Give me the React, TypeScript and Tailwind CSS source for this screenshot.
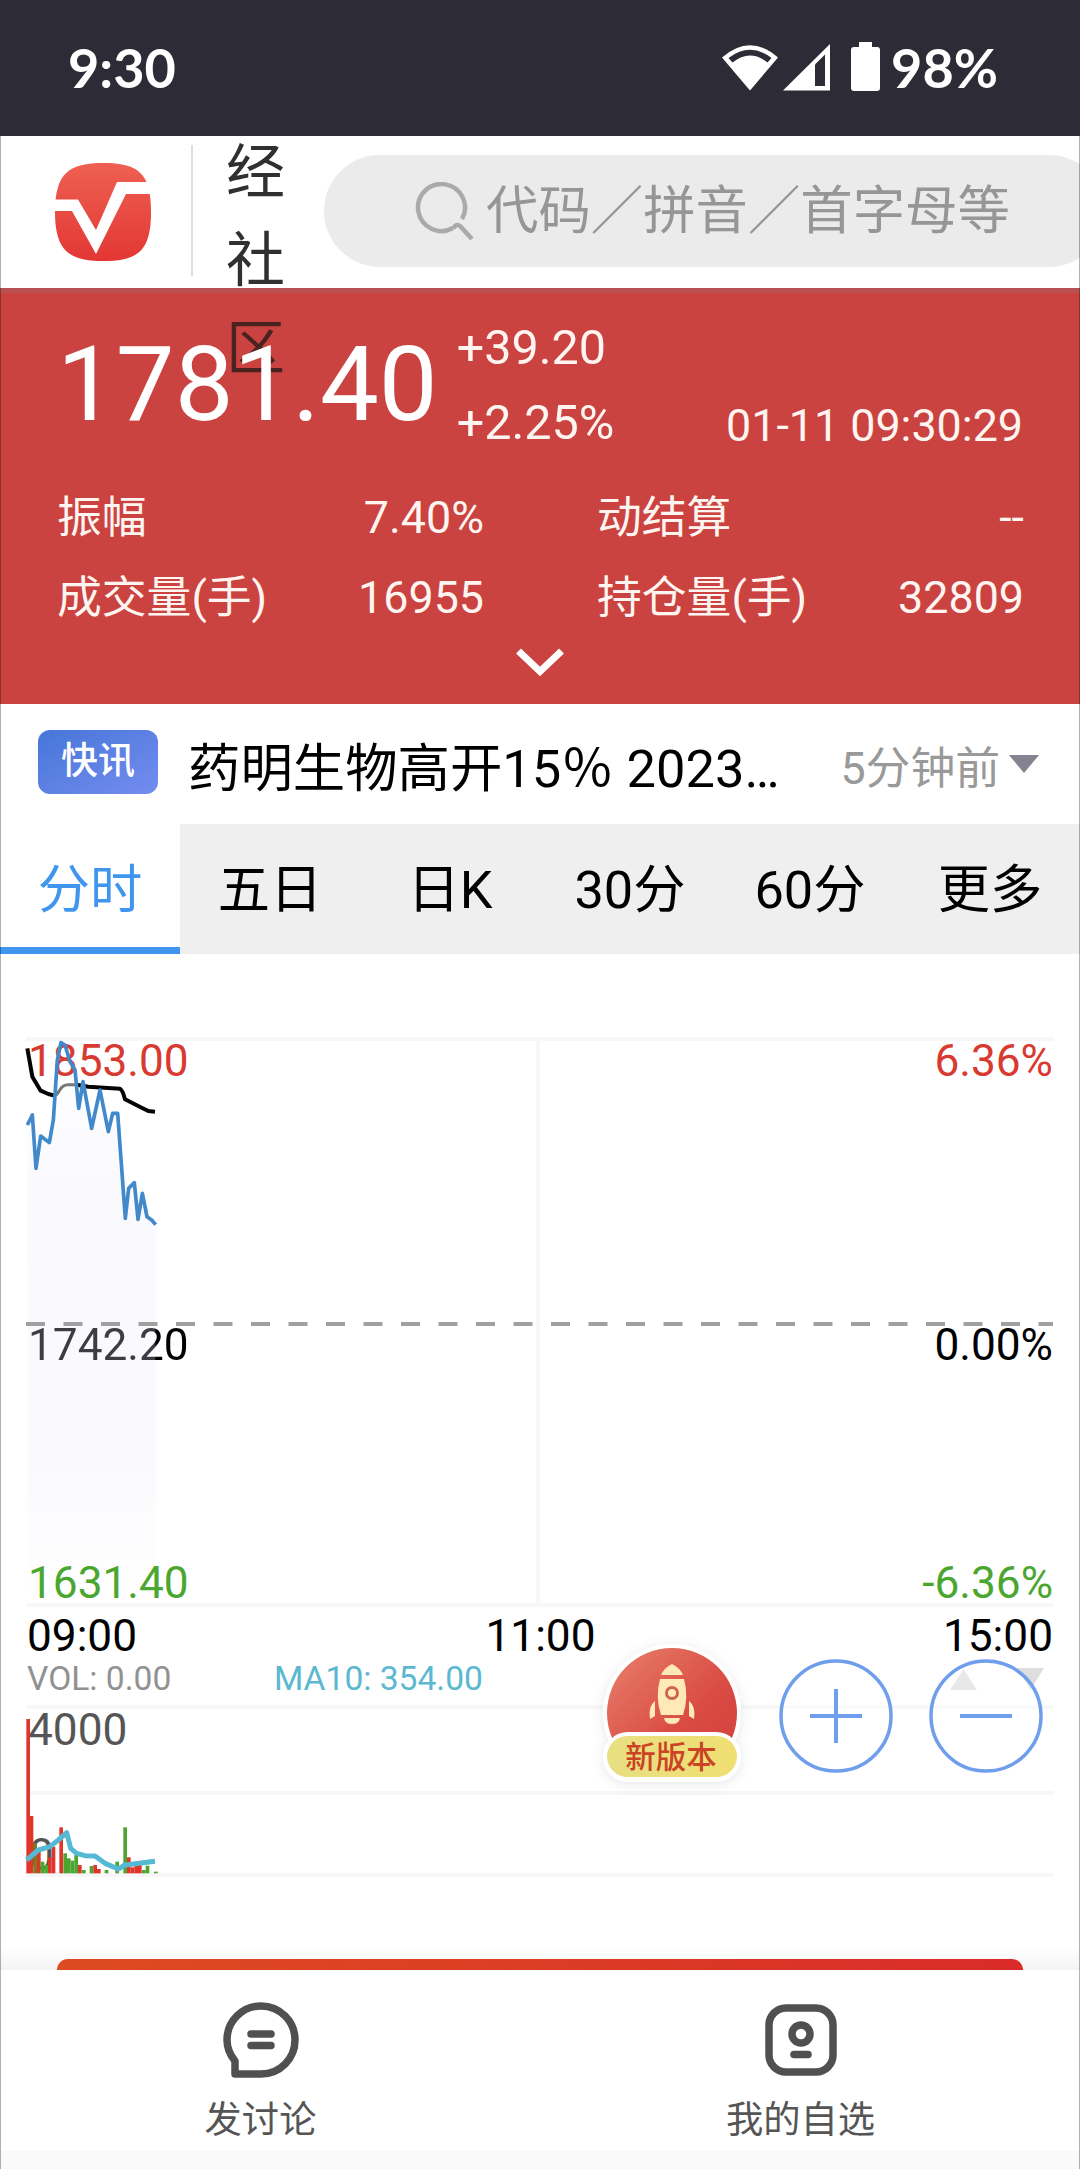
import React from "react";

const priceLine =
  "82,315 97,285 108,445 122,348 148,368 160,300 172,120 183,68 195,75 210,125 225,150 236,265 249,185 275,325 300,210 325,335 338,280 353,280 376,595 386,505 403,488 414,598 427,520 441,590 455,600 467,614";

const volumeLine =
  "80,510 115,480 150,470 175,450 200,428 212,475 230,490 255,497 285,498 315,520 355,537 375,525 400,522 465,514";

const RED = "#e0352b";
const GREEN = "#4ba62f";

const volumeBars: [number, number, string][] = [
  [79, 87, RED], [89, 378, RED], [100, 460, "#7d7a1f"], [111, 478, RED], [122, 515, GREEN],
  [133, 525, GREEN], [144, 502, RED], [155, 470, RED], [178, 412, RED], [190, 490, GREEN],
  [201, 505, GREEN], [212, 512, GREEN], [223, 495, GREEN], [234, 525, RED], [246, 540, GREEN],
  [269, 528, GREEN], [280, 525, RED], [291, 537, RED], [314, 540, GREEN], [346, 515, GREEN],
  [370, 412, GREEN], [381, 502, RED], [392, 532, RED], [403, 528, RED], [414, 524, RED],
  [426, 540, GREEN], [437, 527, GREEN], [462, 545, GREEN],
];

function StatusBar() {
  return (
    <div className="flex h-[136px] items-center justify-between bg-[#2d2b35] pl-[68px] pr-[82px] font-['Lato'] text-[54px] font-bold leading-none text-white">
      <span>9:30</span>
      <div className="flex items-center">
        <svg width="158" height="52" viewBox="721 43 158 52" className="mr-[11px]" fill="#fff">
          <path d="M721 58.500Q749 34 777 58.500L749 91.500Z" />
          <path d="M727.500 59Q749 42.500 770.500 59L766.500 63.500Q749 49.500 731.500 63.500Z" fill="#2d2b35" />
          <path d="M782 91.500L829 45V91.500Z" />
          <path d="M814 65.500L824 55.500V87H814Z" fill="#2d2b35" />
          <path d="M858 43H871V48H876Q879 48 879 51V89Q879 92 876 92H853Q850 92 850 89V51Q850 48 853 48H858Z" />
        </svg>
        <span>98%</span>
      </div>
    </div>
  );
}

function Header() {
  return (
    <header className="relative z-10 flex h-[152px] items-start overflow-x-clip bg-white pt-[9px]">
      <svg width="97" height="98" viewBox="0 0 97 98" className="ml-[55px] mt-[18px] shrink-0">
        <defs>
          <linearGradient id="logo" x1="0" y1="0" x2="0" y2="1">
            <stop offset="0" stopColor="#ee6052" />
            <stop offset="1" stopColor="#e33734" />
          </linearGradient>
        </defs>
        <path d="M48.500 0C83 0 96 10 96 49S83 98 48.500 98S0 88 0 49S14 0 48.500 0Z" fill="url(#logo)" />
        <path d="M-1 36.500H23L41 67L62 19H98V31H71L41 91L17 48H-1Z" fill="#fff" />
      </svg>
      <div className="ml-[39px] h-[131px] w-[2px] shrink-0 bg-[#dedede]" />
      <div className="ml-[33px] mt-[-16px] flex h-[152px] w-[60px] shrink-0 flex-col text-[59px] leading-[88px] text-[#303030]">
        <span>经</span>
        <span>社</span>
        <span className="text-[#4a2220]">区</span>
      </div>
      <div className="ml-[38px] mt-[10px] flex h-[112px] w-[781px] shrink-0 items-center rounded-full bg-[#ebebeb] pl-[91px] text-[52.400px] text-[#969696]">
        <svg width="60" height="60" viewBox="0 0 60 60" fill="none" stroke="#aaa" strokeWidth="4.500" className="mr-[11px] mt-[2px] shrink-0">
          <path d="M47 37A23.500 23.500 0 1 0 38 46" />
          <path d="M38.500 46.500Q41 41 45 44L57 57" />
        </svg>
        <span className="whitespace-nowrap leading-[114px]">代码／拼音／首字母等</span>
      </div>
    </header>
  );
}

const stats: [string, string][] = [
  ["振幅", "7.40%"],
  ["动结算", "--"],
  ["成交量(手)", "16955"],
  ["持仓量(手)", "32809"],
];

function Quote() {
  return (
    <section className="flex h-[416px] flex-col border-t-[5px] border-[#b95152] bg-[#ca4340] text-[44.800px] text-[#fff5f0]">
      <div className="relative z-20 flex h-[182px]">
        <span className="ml-[57px] mt-[32px] text-[104.700px] leading-[120px] text-white">1781.40</span>
        <div className="ml-[19px] mt-[17px] flex flex-col text-[48.500px] leading-[75px]">
          <span>+39.20</span>
          <span>+2.25%</span>
        </div>
        <span className="ml-auto mr-[57px] mt-[93px] leading-[80px]">01-11 09:30:29</span>
      </div>
      <div className="mt-[3px] grid grid-cols-2 leading-[80px]">
        {stats.map(([label, value]) => (
          <div key={label} className="flex justify-between pl-[57px] pr-[56px]">
            <span>{label}</span>
            <span>{value}</span>
          </div>
        ))}
      </div>
      <svg width="48" height="30" viewBox="0 0 48 30" fill="none" stroke="#fff" strokeWidth="7" className="mx-auto mt-[10px]">
        <path d="M2.500 3L24 23.500L45.500 3" />
      </svg>
    </section>
  );
}

function News() {
  return (
    <div className="flex h-[120px] items-start">
      <span className="ml-[38px] mt-[26px] flex h-[64px] w-[120px] items-center justify-center rounded-[12px] bg-linear-to-br from-[#4576d8] to-[#748cf0] pb-px text-[37px] font-medium leading-none text-white">
        快讯
      </span>
      <span className="ml-[30px] mt-[35px] w-[600px] whitespace-nowrap text-[52.400px] leading-[60px] text-black">
        药明生物高开15％ 2023…
      </span>
      <span className="ml-auto mt-[37px] text-[44.800px] leading-[56px] text-[#999]">5分钟前</span>
      <svg width="30" height="18" viewBox="0 0 30 18" className="ml-[9px] mr-[41px] mt-[51px]">
        <path d="M0 0H30L15 18Z" fill="#858392" />
      </svg>
    </div>
  );
}

function Tabs() {
  return (
    <nav className="flex h-[130px] bg-[#efefef] text-center text-[52.300px] leading-[132px] text-black">
      <span className="h-[130px] w-1/6 border-b-[7px] border-[#4096ee] bg-white text-[#4096ee]">分时</span>
      <span className="w-1/6">五日</span>
      <span className="w-1/6">日K</span>
      <span className="w-1/6">30分</span>
      <span className="w-1/6">60分</span>
      <span className="w-1/6">更多</span>
    </nav>
  );
}

function Rocket() {
  return (
    <svg width="150" height="154" viewBox="597 1636 150 154" className="overflow-visible">
      <defs>
        <linearGradient id="rocketBg" x1="0" y1="0" x2="1" y2="1">
          <stop offset="0" stopColor="#e8806c" />
          <stop offset="0.600" stopColor="#d94a43" />
          <stop offset="1" stopColor="#d43f3c" />
        </linearGradient>
        <linearGradient id="pill" x1="0" y1="0" x2="1" y2="0">
          <stop offset="0" stopColor="#e8df83" />
          <stop offset="1" stopColor="#f0df72" />
        </linearGradient>
        <filter id="soft" x="-20%" y="-20%" width="140%" height="140%">
          <feDropShadow dx="0" dy="2" stdDeviation="6" floodColor="#777b90" floodOpacity="0.180" />
        </filter>
      </defs>
      <g filter="url(#soft)" fill="#fff">
        <circle cx="672" cy="1713" r="69" />
        <rect x="603" y="1732" width="138" height="50" rx="25" />
      </g>
      <circle cx="672" cy="1713" r="65" fill="url(#rocketBg)" />
      <rect x="603.500" y="1732" width="137" height="49" rx="24.500" fill="#fff" />
      <rect x="607" y="1736" width="130" height="41" rx="20.500" fill="url(#pill)" />
      <g fill="#ffe9b4">
        <path d="M661 1675Q664 1668 672 1664Q680 1668 683 1675Z" />
        <path d="M660 1679H684Q689 1697 683 1715H661Q655 1697 660 1679Z" />
        <path d="M664 1718H680Q679 1724 672 1724Q665 1724 664 1718Z" />
        <path d="M655 1701V1716L650 1719Q648 1706 655 1701Z" />
        <path d="M689 1701V1716L694 1719Q696 1706 689 1701Z" />
      </g>
      <circle cx="672" cy="1693" r="5.500" fill="none" stroke="#cf6350" strokeWidth="3" />
    </svg>
  );
}

function ZoomButton({ plus }: { plus?: boolean }) {
  return (
    <svg width="114" height="114" viewBox="0 0 114 114" fill="none" stroke="#6f9fec" strokeWidth="3.500">
      <circle cx="57" cy="57" r="55" fill="#fff" fillOpacity="0.300" />
      <path d="M31 57H83" strokeWidth="4" />
      {plus && <path d="M57 30V84" strokeWidth="4" />}
    </svg>
  );
}

function Chart() {
  return (
    <section className="relative isolate h-[1016px] overflow-hidden bg-white pl-[28px] pr-[27px] text-[44.200px] leading-[52px] text-black">
      <div className="mt-[81px] flex justify-between text-[#d93a30]">
        <span>1853.00</span>
        <span>6.36%</span>
      </div>
      <div className="mt-[232px] flex justify-between">
        <span className="bg-linear-to-r from-[#3c3c42] from-[127px] to-black to-[128px] bg-clip-text text-transparent">
          1742.20
        </span>
        <span>0.00%</span>
      </div>
      <div className="mt-[186px] flex justify-between text-[#4ba62f]">
        <span>1631.40</span>
        <span>-6.36%</span>
      </div>
      <div className="mt-px grid grid-cols-3">
        <span className="ml-[-1px]">09:00</span>
        <span className="text-center">11:00</span>
        <span className="text-right">15:00</span>
      </div>
      <div className="mt-[-1px] flex h-[36px] text-[33.600px] leading-[36px]">
        <span className="ml-[-1px] w-[247px] text-[#919191]">VOL: 0.00</span>
        <span className="text-[#5bb8d0]">MA10: 354.00</span>
      </div>
      <div className="mt-[7px] text-[#555]">4000</div>
      <div className="mt-[73px] w-fit pl-px text-[#555]">0</div>

      <svg width="1080" height="1016" viewBox="0 954 1080 1016" className="absolute left-0 top-0 -z-10" fill="none">
        <defs>
          <linearGradient id="area" x1="0" y1="0" x2="0" y2="1">
            <stop offset="0" stopColor="#ffffff" />
            <stop offset="0.300" stopColor="#f9f9fe" />
            <stop offset="0.750" stopColor="#fafafe" />
            <stop offset="1" stopColor="#ffffff" />
          </linearGradient>
        </defs>
        <g stroke="#f7f7f7" strokeWidth="4">
          <path d="M26 1039H1053M26 1605H1053M26 1707H1053M26 1793H1053M26 1875H1053" />
          <path d="M538 1038V1605" />
        </g>
        <g transform="translate(0 1020) scale(0.33333)">
          <polygon points={"84,1750 " + priceLine + " 467,1750"} fill="url(#area)" />
        </g>
        <path d="M26 1324H1053" stroke="#a0a0a0" strokeWidth="4" strokeDasharray="19 18.500" />
      </svg>

      <svg width="1080" height="1016" viewBox="0 954 1080 1016" className="absolute left-0 top-0" fill="none">
        <g transform="translate(0 1020) scale(0.33333)" strokeLinejoin="round">
          <path d="M82 85L97 170L122 212L145 222L163 227" stroke="#050505" strokeWidth="12" />
          <path d="M163 227Q172 225 178 212Q188 193 206 194H232" stroke="#777" strokeWidth="9" />
          <path d="M230 194L265 200L360 206Q368 210 375 238L425 263L445 273L465 275" stroke="#050505" strokeWidth="12" />
          <polyline points={priceLine} stroke="#4189cb" strokeWidth="11" />
        </g>
        <g transform="translate(0 1690) scale(0.33333)">
          {volumeBars.map(([x, y, color]) => (
            <rect key={x} x={x} y={y} width={11} height={550 - y} fill={color} />
          ))}
          <polyline points={volumeLine} stroke="#56b9d4" strokeWidth="15" strokeLinejoin="round" />
        </g>
        <path d="M950 1690L963.500 1669L977 1690ZM1017 1668H1044L1030.500 1690Z" fill="#dedede" />
      </svg>

      <div className="absolute left-[597px] top-[682px]">
        <Rocket />
        <span className="absolute left-[-1px] top-[101px] w-full text-center text-[30.500px] font-medium leading-[42px] text-[#cb4324]">
          新版本
        </span>
      </div>
      <div className="absolute left-[779px] top-[705px] flex gap-[36px]">
        <ZoomButton plus />
        <ZoomButton />
      </div>
      <div className="absolute inset-x-0 bottom-0 flex h-[22px] items-end bg-linear-to-b from-white to-[#f3f3f3] px-[57px]">
        <div className="h-[11px] w-full rounded-t-[11px] bg-linear-to-r from-[#de4b20] to-[#d92b29]" />
      </div>
    </section>
  );
}

function BottomNav() {
  return (
    <nav className="grid h-[199px] grid-cols-2 border-b-[18px] border-[#fafafa] bg-white text-[37.300px] leading-[44px] text-[#555]">
      <div className="flex flex-col items-center pr-[19px] pt-[32px]">
        <svg width="76" height="76" viewBox="0 0 76 76" fill="none" stroke="#505050" strokeWidth="7.500">
          <path d="M38 4A34 34 0 0 1 38 72H12V59Q4 49 4 38A34 34 0 0 1 38 4Z" strokeLinejoin="round" />
          <path d="M28 32H48M28 43.500H48" strokeLinecap="round" />
        </svg>
        <span className="mt-[20px]">发讨论</span>
      </div>
      <div className="flex flex-col items-center pr-[19px] pt-[33px]">
        <svg width="74" height="74" viewBox="0 0 74 74" fill="none" stroke="#505050" strokeWidth="7.500">
          <rect x="5" y="5" width="64" height="64" rx="17" />
          <circle cx="37" cy="31" r="9" />
          <path d="M30 51.500H44" strokeLinecap="round" />
        </svg>
        <span className="mt-[21px]">我的自选</span>
      </div>
    </nav>
  );
}

export default function App() {
  return (
    <div className="relative h-[2169px] w-[1080px] overflow-hidden bg-white font-['Roboto','Noto_Sans_CJK_SC',sans-serif]">
      <StatusBar />
      <Header />
      <Quote />
      <News />
      <Tabs />
      <Chart />
      <BottomNav />
      <div className="pointer-events-none absolute inset-x-0 bottom-0 top-[136px] z-30 border-x border-black/30" />
    </div>
  );
}
